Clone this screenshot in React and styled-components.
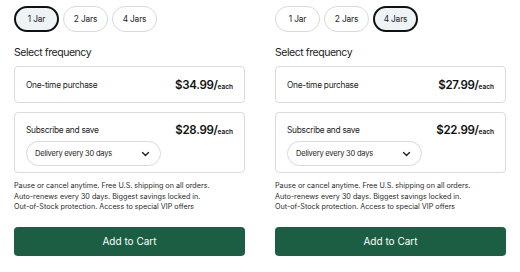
import React, { useState } from 'react';
import styled, { createGlobalStyle } from 'styled-components';

const GlobalStyle = createGlobalStyle`
  html, body {
    margin: 0;
    padding: 0;
    background: #fff;
    font-family: Inter, "Noto Sans", sans-serif;
    color: #1c1c1c;
  }
`;

const products = [
  { selected: 0, once: '$34.99', sub: '$28.99' },
  { selected: 2, once: '$27.99', sub: '$22.99' },
];

const sizes = ['1 Jar', '2 Jars', '4 Jars'];

const Chevron = () => (
  <svg width="9" height="6" viewBox="0 0 9 6" fill="none">
    <path d="M1.5 1.5L4.5 4.5L7.5 1.5" stroke="#222" strokeWidth="1.4" strokeLinecap="round" strokeLinejoin="round" />
  </svg>
);

const PurchaseBox = ({ product }) => {
  const [selected, setSelected] = useState(product.selected);

  return (
    <Column>
      <PillRow>
        {sizes.map((size, i) => (
          <Pill key={size} $active={i === selected} onClick={() => setSelected(i)}>
            {size}
          </Pill>
        ))}
      </PillRow>

      <Heading>Select frequency</Heading>

      <Option>
        <OptionRow>
          <OptionLabel>One-time purchase</OptionLabel>
          <Price>{product.once}/<small>each</small></Price>
        </OptionRow>
      </Option>

      <Option $tall>
        <OptionRow>
          <OptionLabel>Subscribe and save</OptionLabel>
          <Price>{product.sub}/<small>each</small></Price>
        </OptionRow>
        <Dropdown>
          <span>Delivery every 30 days</span>
          <Chevron />
        </Dropdown>
      </Option>

      <Note>
        Pause or cancel anytime. Free U.S. shipping on all orders.<br />
        Auto-renews every 30 days. Biggest savings locked in.<br />
        Out-of-Stock protection. Access to special VIP offers
      </Note>

      <CartButton>Add to Cart</CartButton>
    </Column>
  );
};

const App = () => (
  <>
    <GlobalStyle />
    <Page>
      {products.map((p, i) => <PurchaseBox key={i} product={p} />)}
    </Page>
  </>
);

const Page = styled.div`
  display: flex;
  gap: 30px;
  padding: 6px 14px 0;
`;

const Column = styled.div`
  width: 231px;
  display: flex;
  flex-direction: column;
`;

const PillRow = styled.div`
  display: flex;
  gap: 4px;
`;

const Pill = styled.button`
  width: 45px;
  height: 26px;
  box-sizing: border-box;
  border-radius: 13px;
  border: ${p => (p.$active ? '2px solid #111' : '1px solid #d9d9d9')};
  background: ${p => (p.$active ? '#eef3f6' : '#fff')};
  font-family: inherit;
  font-size: 8.3px;
  letter-spacing: -0.15px;
  color: #222;
  padding: 0;
  cursor: pointer;
`;

const Heading = styled.div`
  margin-top: 14px;
  font-size: 10.5px;
  letter-spacing: -0.45px;
  line-height: 14px;
  color: #222;
`;

const Option = styled.div`
  margin-top: ${p => (p.$tall ? '9px' : '6px')};
  height: ${p => (p.$tall ? '61px' : '37px')};
  box-sizing: border-box;
  border: 1px solid #dcdcdc;
  border-radius: 4px;
  padding: 0 11px;
  display: flex;
  flex-direction: column;
  justify-content: ${p => (p.$tall ? 'flex-start' : 'center')};
  padding-top: ${p => (p.$tall ? '10px' : '0')};
`;

const OptionRow = styled.div`
  display: flex;
  justify-content: space-between;
  align-items: center;
`;

const OptionLabel = styled.span`
  font-size: 8.3px;
  letter-spacing: -0.25px;
  color: #222;
`;

const Price = styled.span`
  font-size: 11.5px;
  font-weight: 600;
  letter-spacing: -0.3px;
  color: #111;
  small {
    font-size: 6.5px;
    font-weight: 600;
    letter-spacing: 0;
  }
`;

const Dropdown = styled.div`
  margin-top: 4px;
  width: 135px;
  height: 25px;
  box-sizing: border-box;
  border: 1px solid #d9d9d9;
  border-radius: 13px;
  padding: 0 10px 0 8px;
  display: flex;
  align-items: center;
  justify-content: space-between;
  font-size: 7.5px;
  letter-spacing: -0.2px;
  color: #222;
`;

const Note = styled.p`
  margin: 8px 0 0;
  font-size: 7.2px;
  line-height: 10.5px;
  color: #2a2a2a;
`;

const CartButton = styled.button`
  margin-top: 14px;
  height: 29px;
  border: none;
  border-radius: 4px;
  background: #1b5e44;
  color: #fff;
  font-family: inherit;
  font-size: 10px;
  cursor: pointer;
`;

export default App;
